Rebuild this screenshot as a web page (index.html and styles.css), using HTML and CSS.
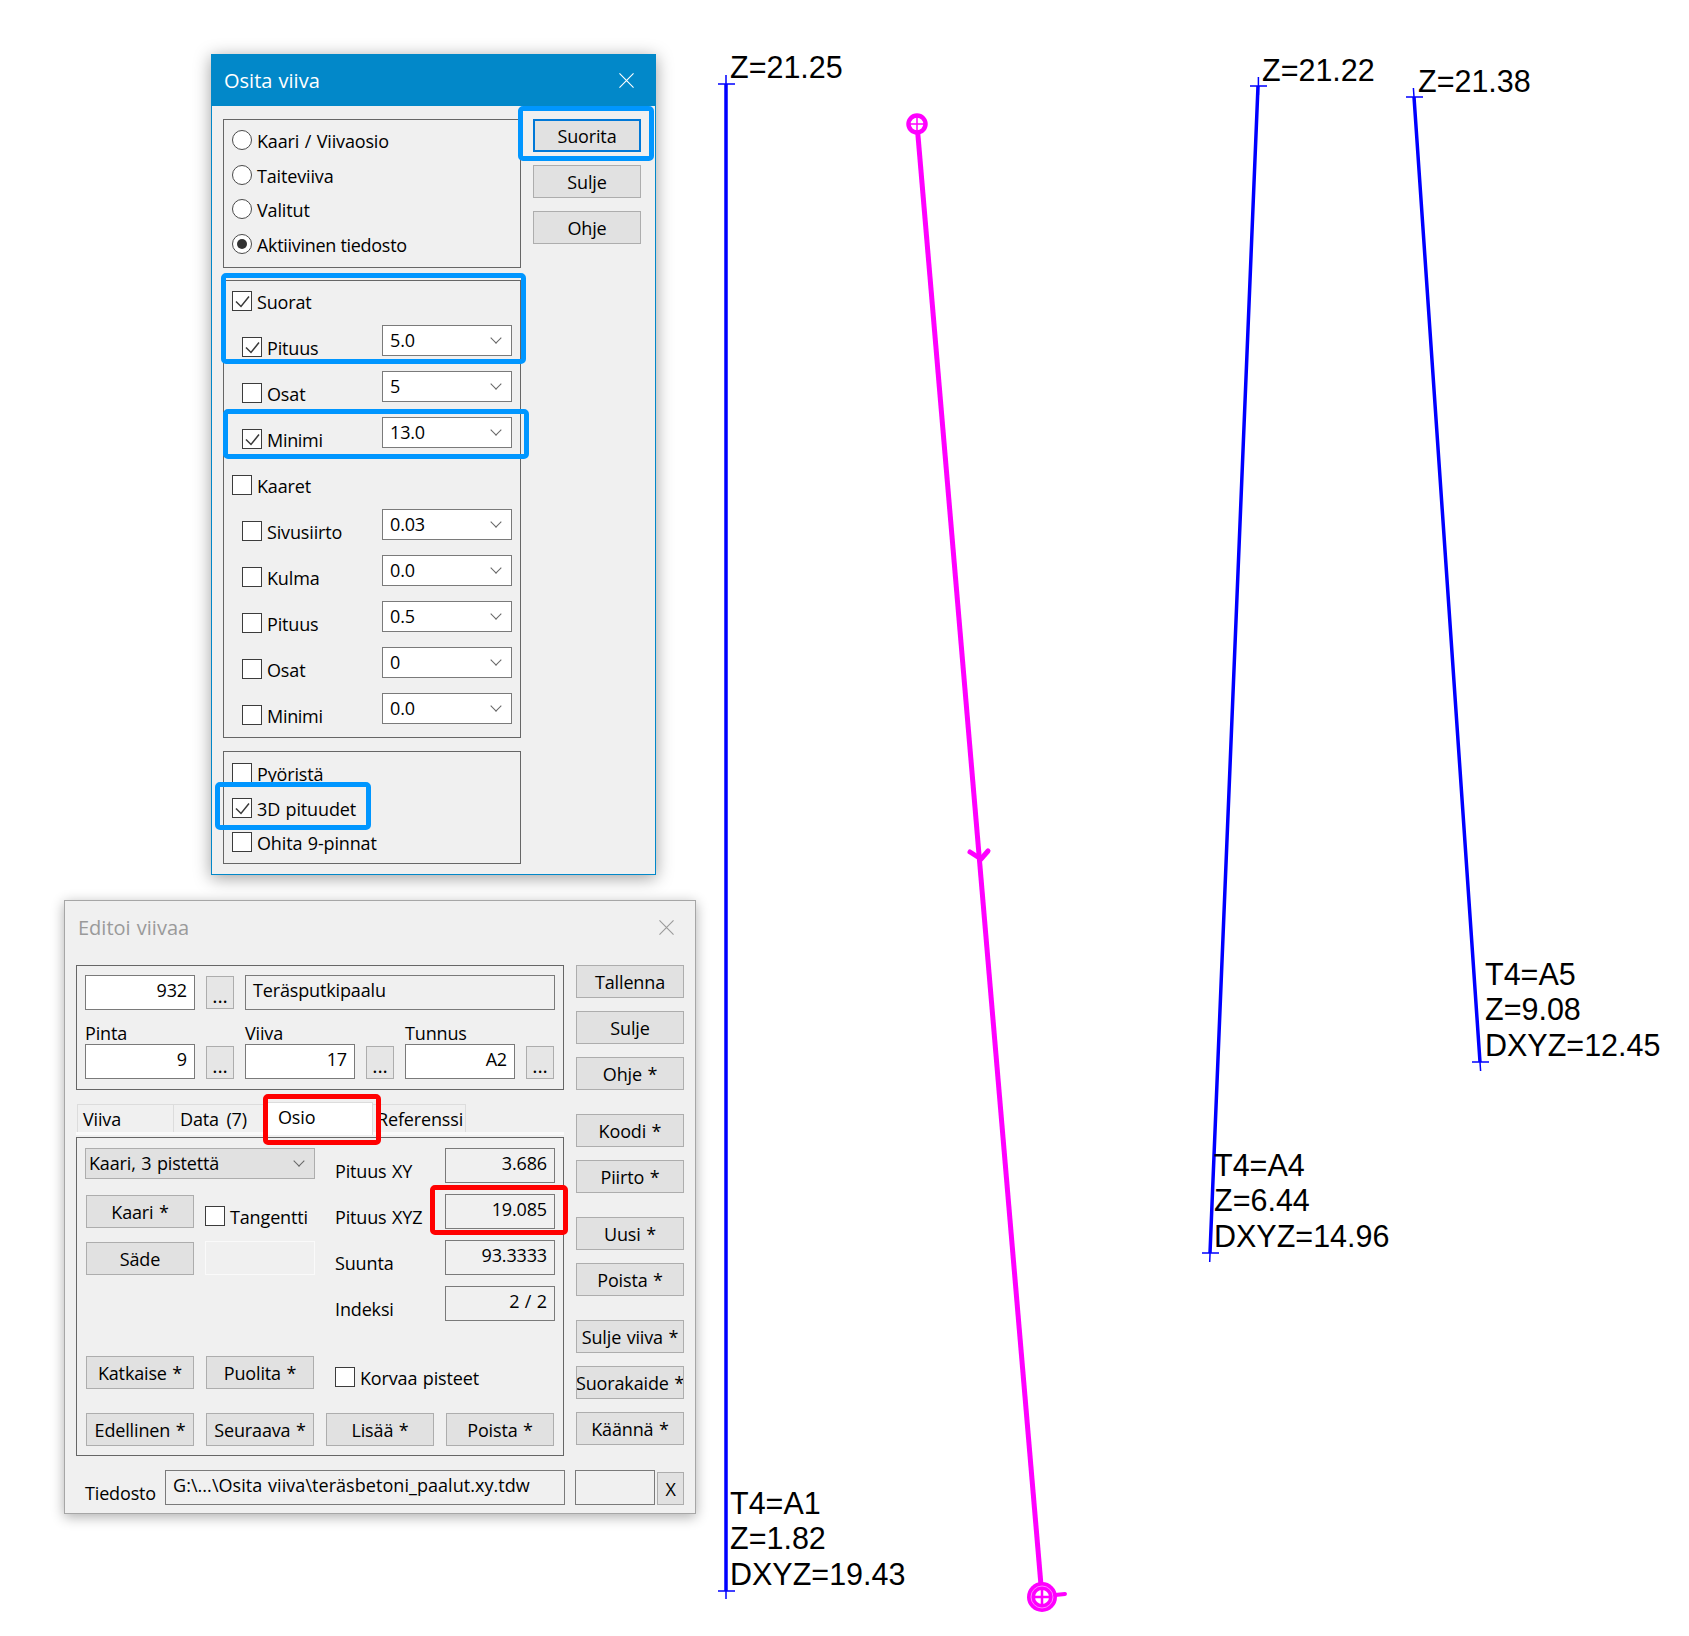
FILE: index.html
```html
<!DOCTYPE html>
<html lang="fi">
<head>
<meta charset="utf-8">
<title>Osita viiva</title>
<link rel="stylesheet" href="styles.css">
</head>
<body>
<div class="canvas">

  <svg class="drawing" width="1689" height="1636" viewBox="0 0 1689 1636">
    <g class="blue">
      <path d="M726 84V1591M1258 86L1210 1253M1414 97L1480 1062"/>
    </g>
    <g class="blue-thin">
      <path d="M726 75V1599M718 84H735M718 1591H735"/>
      <path d="M1258.4 77V95M1250 86H1267M1210.400 1244L1209.700 1262M1202 1253H1219"/>
      <path d="M1413.400 88L1414.600 106M1406 97H1423M1479.400 1053L1480.600 1071M1472 1062H1489"/>
    </g>
    <g class="magenta">
      <path class="mg-line" d="M917 124L1042 1597"/>
      <path class="mg-arrow" d="M970 852L981 859L988 851"/>
      <circle class="mg-hole" cx="917" cy="124" r="8.500"/>
      <path class="mg-cross" d="M909 124H925M917 116V132"/>
      <circle class="mg-solid" cx="1042" cy="1597" r="15"/>
      <circle class="mg-halo" cx="1042" cy="1597" r="11"/>
      <circle class="mg-pin" cx="1042" cy="1597" r="7"/>
      <path class="mg-cross-b" d="M1035 1597H1049M1042 1590V1604"/>
      <path class="mg-tail" d="M1055 1595L1065 1594"/>
    </g>
  </svg>

  <div class="note n1">Z=21.25</div>
  <div class="note n2">Z=21.22</div>
  <div class="note n3">Z=21.38</div>
  <div class="note n4">T4=A1<br>Z=1.82<br>DXYZ=19.43</div>
  <div class="note n5">T4=A4<br>Z=6.44<br>DXYZ=14.96</div>
  <div class="note n6">T4=A5<br>Z=9.08<br>DXYZ=12.45</div>

  <section class="win win-split">
    <header class="title title-active">
      <span>Osita viiva</span>
      <svg class="close" viewBox="0 0 16 16"><path d="M.5.5L15.500 15.500M15.500.5L.5 15.500"/></svg>
    </header>
    <div class="split-body">
      <div class="split-left">
        <div class="group stack">
          <div class="opt"><i class="radio"></i>Kaari / Viivaosio</div>
          <div class="opt"><i class="radio"></i>Taiteviiva</div>
          <div class="opt"><i class="radio"></i>Valitut</div>
          <div class="opt"><i class="radio on"></i><span class="tight">Aktiivinen tiedosto</span></div>
        </div>
        <div class="group rows">
          <div class="row first"><div class="opt"><i class="check"><svg viewBox="0 0 18 18"><path d="M3 9.500L8 14.500L16 4.500"/></svg></i>Suorat</div></div>
          <div class="row sub"><div class="opt"><i class="check"><svg viewBox="0 0 18 18"><path d="M3 9.500L8 14.500L16 4.500"/></svg></i>Pituus</div><div class="combo">5.0</div></div>
          <div class="row sub"><div class="opt"><i class="check"></i>Osat</div><div class="combo">5</div></div>
          <div class="row sub"><div class="opt"><i class="check"><svg viewBox="0 0 18 18"><path d="M3 9.500L8 14.500L16 4.500"/></svg></i><span class="tight">Minimi</span></div><div class="combo">13.0</div></div>
          <div class="row"><div class="opt"><i class="check"></i>Kaaret</div></div>
          <div class="row sub"><div class="opt"><i class="check"></i>Sivusiirto</div><div class="combo">0.03</div></div>
          <div class="row sub"><div class="opt"><i class="check"></i>Kulma</div><div class="combo">0.0</div></div>
          <div class="row sub"><div class="opt"><i class="check"></i>Pituus</div><div class="combo">0.5</div></div>
          <div class="row sub"><div class="opt"><i class="check"></i>Osat</div><div class="combo">0</div></div>
          <div class="row sub"><div class="opt"><i class="check"></i><span class="tight">Minimi</span></div><div class="combo">0.0</div></div>
        </div>
        <div class="group stack stack-last">
          <div class="opt"><i class="check"></i>Pyöristä</div>
          <div class="opt"><i class="check"><svg viewBox="0 0 18 18"><path d="M3 9.500L8 14.500L16 4.500"/></svg></i>3D pituudet</div>
          <div class="opt"><i class="check"></i>Ohita 9-pinnat</div>
        </div>
      </div>
      <div class="btn-col">
        <div class="btn btn-default">Suorita</div>
        <div class="btn">Sulje</div>
        <div class="btn">Ohje</div>
      </div>
    </div>
  </section>

  <section class="win win-edit">
    <header class="title title-idle">
      <span>Editoi viivaa</span>
      <svg class="close" viewBox="0 0 16 16"><path d="M.5.5L15.500 15.500M15.500.5L.5 15.500"/></svg>
    </header>
    <div class="edit-main">
      <div class="edit-left">
        <div class="group head-grid">
          <div class="field white">932</div>
          <div class="btn dots">...</div>
          <div class="field left wide">Teräsputkipaalu</div>
          <div class="cap c1">Pinta</div>
          <div class="cap c3">Viiva</div>
          <div class="cap c5">Tunnus</div>
          <div class="field white">9</div>
          <div class="btn dots">...</div>
          <div class="field white">17</div>
          <div class="btn dots">...</div>
          <div class="field white">A2</div>
          <div class="btn dots">...</div>
        </div>
        <div class="tabs">
          <div class="tab t-viiva">Viiva</div>
          <div class="tab t-data">Data (7)</div>
          <div class="tab tab-on">Osio</div>
          <div class="tab t-ref">Referenssi</div>
        </div>
        <div class="group pane">
          <div class="pane-top">
            <div class="pane-l">
              <div class="combo combo-grey">Kaari, 3 pistettä</div>
              <div class="pane-row">
                <div class="btn">Kaari *</div>
                <div class="opt opt-low"><i class="check"></i>Tangentti</div>
              </div>
              <div class="pane-row pane-row-s">
                <div class="btn">Säde</div>
                <div class="field blank"></div>
              </div>
            </div>
            <div class="pane-r">
              <div class="kv"><span>Pituus XY</span><div class="field">3.686</div></div>
              <div class="kv"><span>Pituus XYZ</span><div class="field">19.085</div></div>
              <div class="kv"><span>Suunta</span><div class="field">93.3333</div></div>
              <div class="kv"><span>Indeksi</span><div class="field">2 / 2</div></div>
            </div>
          </div>
          <div class="act act-1">
            <div class="btn">Katkaise *</div>
            <div class="btn">Puolita *</div>
            <div class="opt opt-low opt-k"><i class="check"></i>Korvaa pisteet</div>
          </div>
          <div class="act act-2">
            <div class="btn">Edellinen *</div>
            <div class="btn">Seuraava *</div>
            <div class="btn">Lisää *</div>
            <div class="btn">Poista *</div>
          </div>
        </div>
      </div>
      <div class="edit-right">
        <div class="btn-col">
          <div class="btn">Tallenna</div>
          <div class="btn">Sulje</div>
          <div class="btn">Ohje *</div>
        </div>
        <div class="btn-col">
          <div class="btn">Koodi *</div>
          <div class="btn">Piirto *</div>
        </div>
        <div class="btn-col">
          <div class="btn">Uusi *</div>
          <div class="btn">Poista *</div>
        </div>
        <div class="btn-col">
          <div class="btn">Sulje viiva *</div>
          <div class="btn">Suorakaide *</div>
          <div class="btn">Käännä *</div>
        </div>
      </div>
    </div>
    <div class="file-row">
      <span class="file-cap">Tiedosto</span>
      <div class="field left file-path">G:\...\Osita viiva\teräsbetoni_paalut.xy.tdw</div>
      <div class="field file-extra"></div>
      <div class="btn file-x">X</div>
    </div>
  </section>

  <div class="mark blue-mark m-suorita"></div>
  <div class="mark blue-mark m-suorat"></div>
  <div class="mark blue-mark m-minimi"></div>
  <div class="mark blue-mark m-3d"></div>
  <div class="mark red-mark m-osio"></div>
  <div class="mark red-mark m-xyz"></div>
</div>
</body>
</html>
```

FILE: styles.css
```css
* { box-sizing: border-box; }
html, body { margin: 0; padding: 0; background: #fff; }
.canvas {
  position: relative;
  width: 1689px;
  height: 1636px;
  overflow: hidden;
  font-family: "Open Sans", "Noto Sans", sans-serif;
  font-size: 18px;
  letter-spacing: -.15px;
  word-spacing: 1px;
  color: #000;
}
.tight { letter-spacing: -.3px; word-spacing: 0; }

/* drawing */
.drawing { position: absolute; left: 0; top: 0; }
.drawing path, .drawing circle { fill: none; }
.blue path { stroke: #0000ff; stroke-width: 3.500; }
.blue-thin path { stroke: #0000ff; stroke-width: 1.500; }
.drawing .mg-line { stroke: #ff00ff; stroke-width: 5; }
.drawing .mg-arrow { stroke: #ff00ff; stroke-width: 5; stroke-linecap: round; stroke-linejoin: round; }
.drawing .mg-hole { fill: #fff; stroke: #ff00ff; stroke-width: 4.500; }
.drawing .mg-cross { stroke: #ff00ff; stroke-width: 1.500; }
.drawing .mg-solid { fill: #ff00ff; }
.drawing .mg-halo { stroke: #ff80ff; stroke-width: 1; }
.drawing .mg-pin { fill: #fff; }
.drawing .mg-cross-b { stroke: #ff00ff; stroke-width: 2.500; }
.drawing .mg-tail { stroke: #ff00ff; stroke-width: 4; stroke-linecap: round; }

.note {
  position: absolute;
  font-family: "Liberation Sans", Arial, sans-serif;
  font-size: 30.500px;
  letter-spacing: 0;
  word-spacing: 0;
  line-height: 35.300px;
  white-space: nowrap;
  color: #000;
}
.n1 { left: 730px; top: 50px; }
.n2 { left: 1262px; top: 53px; }
.n3 { left: 1418px; top: 64px; }
.n4 { left: 730px; top: 1486px; }
.n5 { left: 1214px; top: 1148px; }
.n6 { left: 1485px; top: 957px; }

/* windows */
.win { position: absolute; background: #f0f0f0; }
.win-split {
  left: 211px; top: 54px; width: 445px; height: 821px;
  border: 1px solid #0288c9;
  border-top: 0;
  box-shadow: 0 3px 16px rgba(0, 0, 0, .38);
}
.win-edit {
  left: 64px; top: 900px; width: 632px; height: 614px;
  border: 1px solid #a6a6a6;
  box-shadow: 0 3px 12px rgba(0, 0, 0, .32);
}
.title {
  display: flex;
  align-items: center;
  justify-content: space-between;
  font-size: 20px;
  letter-spacing: 0;
}
.title-active { height: 52px; background: #0288c9; color: #fff; padding: 0 22px 0 13px; margin: 0 -1px; }
.title-idle { height: 52px; color: #9a9a9a; padding: 0 21px 0 13px; }
.close { width: 15px; height: 15px; }
.close path { fill: none; stroke: currentColor; stroke-width: 1.200; }

/* split dialog */
.split-body { display: flex; gap: 12px; padding: 13px 0 0 11px; }
.split-left { width: 298px; display: flex; flex-direction: column; gap: 12px; }
.group { border: 1px solid #666; }
.stack { display: flex; flex-direction: column; gap: 14.500px; padding: 10px 8px 13px; height: 149px; }
.stack-last { height: 113px; padding-top: 11px; margin-top: 1px; }
.rows { display: flex; flex-direction: column; gap: 13px; padding: 0 8px 12px; }
.row { height: 33px; display: flex; align-items: flex-end; justify-content: space-between; }
.row.first { height: 30px; }
.row.sub { padding-left: 10px; }

.opt { display: flex; align-items: flex-start; gap: 5px; height: 20px; line-height: 22px; white-space: nowrap; }
.radio, .check { display: block; flex: none; width: 20px; height: 20px; background: #fff; }
.radio { border: 1px solid #4a4a4a; border-radius: 50%; position: relative; }
.radio.on::after {
  content: "";
  position: absolute;
  left: 4px; top: 4px;
  width: 10px; height: 10px;
  border-radius: 50%;
  background: #333;
}
.check { border: 1px solid #3c3c3c; }
.check svg { display: block; width: 18px; height: 18px; }
.check path { fill: none; stroke: #3a3a3a; stroke-width: 1.500; }

.combo {
  position: relative;
  width: 130px;
  height: 31px;
  margin-bottom: 1px;
  padding-left: 7px;
  line-height: 28px;
  background: #fff;
  border: 1px solid #7a7a7a;
}
.combo::after {
  content: "";
  position: absolute;
  right: 11px;
  top: 8px;
  width: 7px;
  height: 7px;
  border-right: 1px solid #666;
  border-bottom: 1px solid #666;
  transform: rotate(45deg);
}
.combo-grey {
  width: 230px;
  margin: 0 0 0 -1px;
  padding-left: 3px;
  background: #e1e1e1;
  border-color: #adadad;
}

.btn-col { display: flex; flex-direction: column; gap: 13px; width: 108px; }
.btn {
  display: flex;
  align-items: center;
  justify-content: center;
  width: 108px;
  height: 33px;
  flex: none;
  overflow: hidden;
  white-space: nowrap;
  background: #e1e1e1;
  border: 1px solid #adadad;
}
.btn-default { border: 2px solid #0078d7; }

/* edit dialog */
.edit-main { display: flex; gap: 12px; padding: 12px 0 0 11px; }
.edit-left { width: 488px; }
.edit-right { display: flex; flex-direction: column; gap: 24px; }

.head-grid {
  display: grid;
  grid-template-columns: 110px 28px 110px 28px 110px 28px;
  grid-template-rows: 34px 35px 35px;
  column-gap: 11px;
  padding: 9px 0 0 8px;
  height: 125px;
}
.field {
  height: 35px;
  padding: 0 7px;
  line-height: 28px;
  text-align: right;
  white-space: nowrap;
  border: 1px solid #7a7a7a;
  background: #f0f0f0;
}
.field.white { background: #fff; }
.field.left { text-align: left; }
.wide { grid-column: 3 / span 4; width: 310px; }
.cap { align-self: end; line-height: 22px; }
.c1 { grid-column: 1 / span 2; }
.c3 { grid-column: 3 / span 2; }
.c5 { grid-column: 5 / span 2; }
.dots { width: 28px; height: 33px; align-self: end; padding-top: 6px; background: #e6e6e6; font-size: 20px; }

.tabs {
  display: flex;
  height: 33px;
  margin-top: 12px;
  padding-left: 1px;
  border-bottom: 3px solid #fafafa;
}
.tab {
  height: 28px;
  margin-top: 2px;
  padding-left: 5px;
  line-height: 28px;
  white-space: nowrap;
  border: 1px solid #dcdcdc;
  border-bottom: 0;
  border-left: 0;
}
.t-viiva { width: 97px; border-left: 1px solid #dcdcdc; }
.t-data { width: 90px; padding-left: 6px; word-spacing: 3px; }
.tab-on {
  width: 109px;
  height: 33px;
  margin-top: 0;
  padding-left: 14px;
  line-height: 28px;
  background: #fff;
  position: relative;
}
.t-ref { width: 93px; padding-left: 4px; }

.pane { margin-top: 2px; height: 319px; padding: 10px 9px 0 9px; }
.pane-top { display: flex; justify-content: space-between; }
.pane-l { width: 229px; display: flex; flex-direction: column; }
.pane-row { display: flex; gap: 11px; margin-top: 16px; align-items: flex-end; }
.pane-row-s { margin-top: 13px; }
.opt-low { margin-bottom: 2px; }
.field.blank { width: 110px; flex: none; height: 34px; border-color: #fafafa; }
.pane-r { width: 220px; margin-right: -1px; display: flex; flex-direction: column; gap: 12px; }
.kv { display: flex; justify-content: space-between; height: 34px; }
.kv span { padding-top: 12px; line-height: 22px; }
.kv .field { width: 110px; }

.act { display: flex; gap: 12px; }
.act-1 { margin-top: 36px; align-items: flex-end; }
.act-2 { margin-top: 24px; }
.opt-k { margin-left: 9px; }

.file-row { display: flex; margin-top: 14px; padding-left: 20px; align-items: flex-end; }
.file-cap { width: 80px; line-height: 24px; }
.file-path { width: 400px; letter-spacing: .05px; }
.file-extra { width: 80px; margin-left: 10px; }
.file-x { width: 27px; margin-left: 2px; }

/* annotations */
.mark { position: absolute; border-style: solid; border-width: 5px; border-radius: 5px; }
.blue-mark { border-color: #0096ff; }
.red-mark { border-color: #ff0000; }
.m-suorita { left: 518px; top: 106px; width: 136px; height: 55px; }
.m-suorat { left: 221px; top: 273px; width: 305px; height: 91px; }
.m-minimi { left: 223px; top: 409px; width: 306px; height: 50px; }
.m-3d { left: 215px; top: 782px; width: 156px; height: 48px; }
.m-osio { left: 263px; top: 1094px; width: 118px; height: 51px; }
.m-xyz { left: 430px; top: 1185px; width: 138px; height: 50px; }
```
